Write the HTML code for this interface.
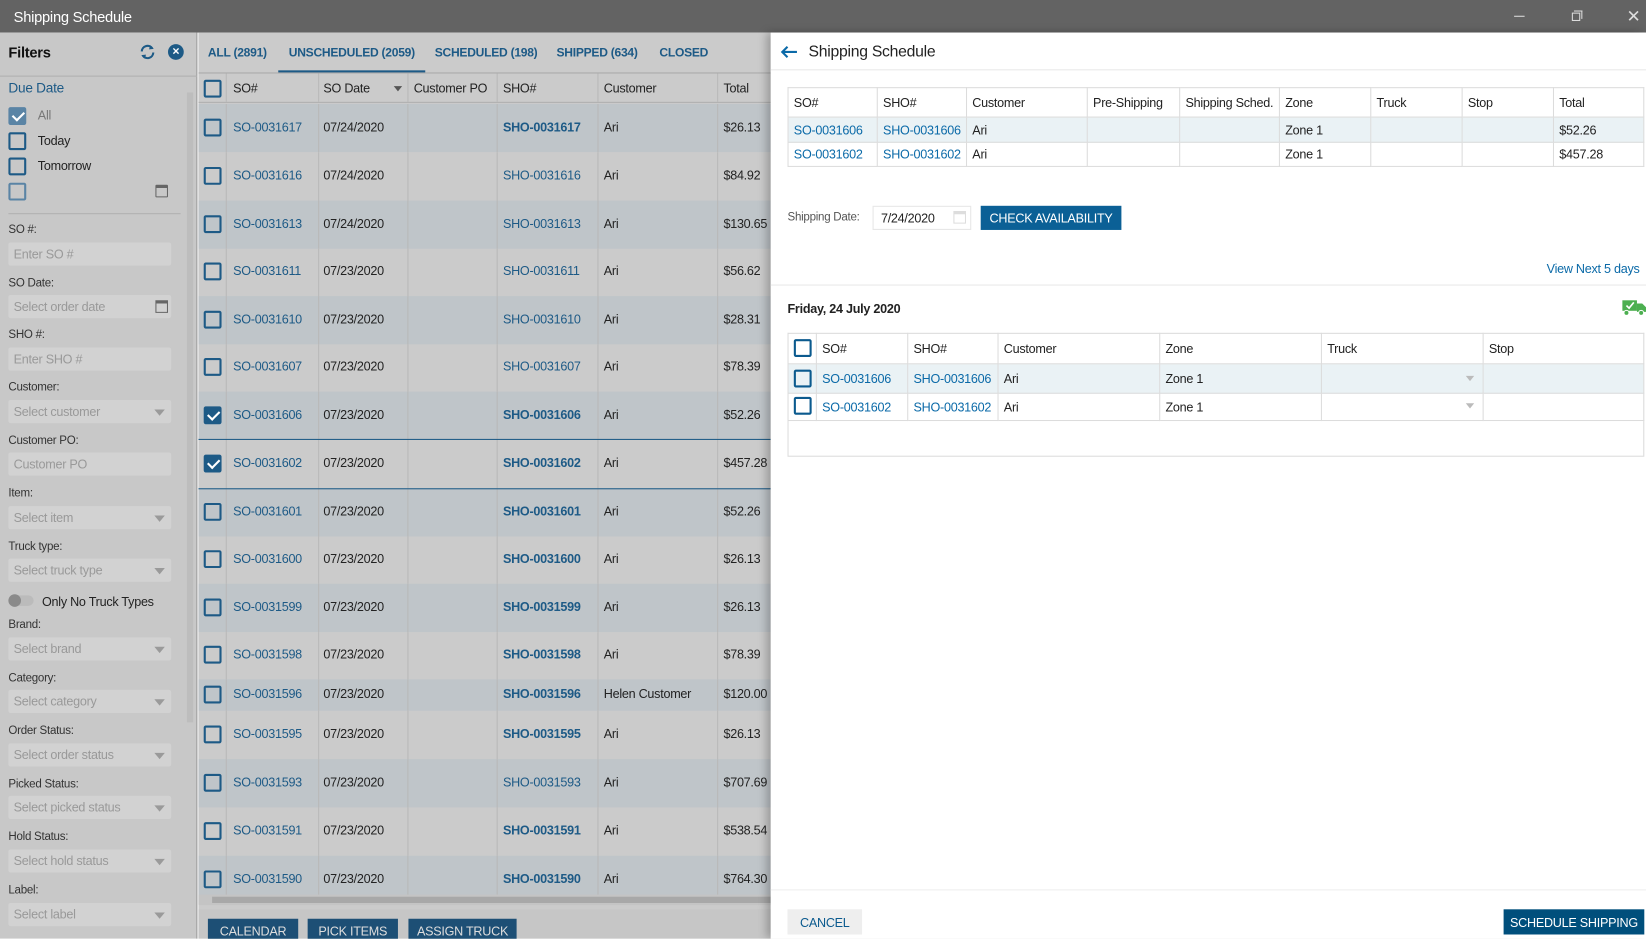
<!DOCTYPE html>
<html><head><meta charset="utf-8">
<style>
*{box-sizing:border-box;margin:0;padding:0}
html,body{width:1646px;height:938px;overflow:hidden;background:#fff}
#s{position:absolute;left:0;top:0;width:1568px;height:894px;transform:scale(1.05);transform-origin:0 0;font-family:"Liberation Sans",sans-serif;font-size:12px;letter-spacing:-0.25px;color:#222;overflow:hidden}
.a{position:absolute}
.t{position:absolute;white-space:nowrap}
.cb{position:absolute;width:17px;height:17px;border:2px solid #1d5a86;border-radius:2px}
.cb.on{background:#1d5a86}
.cb.on:after{content:"";position:absolute;left:4px;top:0px;width:5px;height:9px;border:solid #fff;border-width:0 2px 2px 0;transform:rotate(45deg)}
.lbl{position:absolute;left:8px;font-size:11px;color:#333}
.inp{position:absolute;left:8px;width:155px;height:22px;background:#d2d2d2;border-radius:2px;color:#999;font-size:12px;padding:4px 5px}
.dd:after{content:"";position:absolute;right:6px;top:9px;border:5px solid transparent;border-top:6px solid #9a9a9a}
.row{position:absolute;left:189px;width:545px}
.row .c{position:absolute;top:0;bottom:0;border-left:1px solid #b8b8b8}
.lk{color:#1d5a86}
.rl{color:#0b6aa8}
.tab{position:absolute;top:45px;font-weight:bold;color:#1d5a86;font-size:11.5px;white-space:nowrap}
table{border-collapse:collapse;position:absolute;background:#fff}
td{border:1px solid #dcdcdc;padding:0 5px;font-size:12px;white-space:nowrap}
</style></head><body><div id="s">
<div class="a" style="left:0;top:0;width:1568px;height:31px;background:#636363"></div>
<div class="t" style="left:13px;top:8px;color:#fff;font-size:14px">Shipping Schedule</div>
<div class="a" style="left:1442px;top:15px;width:10px;height:1px;background:#ddd"></div>
<div class="a" style="left:1497px;top:12px;width:8px;height:8px;border:1px solid #ddd"></div>
<div class="a" style="left:1499px;top:10px;width:8px;height:8px;border-top:1px solid #ddd;border-right:1px solid #ddd"></div>
<div class="t" style="left:1549px;top:6px;color:#ddd;font-size:16px">✕</div>

<div class="a" style="left:0;top:31px;width:188px;height:863px;background:#c8c8c8;border-right:1px solid #9a9a9a"></div>
<div class="t" style="left:8px;top:42px;font-size:14px;font-weight:bold;color:#111">Filters</div>
<svg class="a" style="left:132px;top:42px" width="17" height="15" viewBox="0 0 17 15"><path d="M3 7a5.5 5.5 0 0 1 10-3M14 8a5.5 5.5 0 0 1-10 3" fill="none" stroke="#1d5a86" stroke-width="2"/><path d="M11 1l3.5 3.5L10 5z M6 14L2.5 10.5 7 10z" fill="#1d5a86"/></svg>
<div class="a" style="left:160px;top:42px;width:15px;height:15px;border-radius:50%;background:#1d5a86;color:#fff;font-size:9px;text-align:center;line-height:15px;font-weight:bold">✕</div>
<div class="a" style="left:0;top:72px;width:188px;height:1px;background:#b0b0b0"></div>
<div class="a" style="left:178px;top:88px;width:6px;height:600px;background:#bdbdbd"></div>
<div class="t" style="left:8px;top:76px;font-size:13px;color:#1d5a86">Due Date</div>
<div class="cb on" style="left:8px;top:102px;border-color:#5a84a5;background:#5a84a5"></div><div class="t" style="left:36px;top:103px;color:#777">All</div>
<div class="cb" style="left:8px;top:126px"></div><div class="t" style="left:36px;top:127px">Today</div>
<div class="cb" style="left:8px;top:150px"></div><div class="t" style="left:36px;top:151px">Tomorrow</div>
<div class="cb" style="left:8px;top:174px;border-color:#5a84a5"></div>
<div class="a" style="left:148px;top:176px;width:12px;height:12px;border:1.5px solid #666;border-top-width:3px;border-radius:1px"></div>
<div class="a" style="left:8px;top:203px;width:164px;height:1px;background:#b0b0b0"></div>
<div class="lbl" style="top:213px">SO #:</div><div class="inp" style="top:231px">Enter SO #</div>
<div class="lbl" style="top:264px">SO Date:</div><div class="inp" style="top:281px">Select order date</div>
<div class="a" style="left:148px;top:286px;width:12px;height:12px;border:1.5px solid #666;border-top-width:3px"></div>
<div class="lbl" style="top:313px">SHO #:</div><div class="inp" style="top:331px">Enter SHO #</div>
<div class="lbl" style="top:363px">Customer:</div><div class="inp dd" style="top:381px">Select customer</div>
<div class="lbl" style="top:414px">Customer PO:</div><div class="inp" style="top:431px">Customer PO</div>
<div class="lbl" style="top:464px">Item:</div><div class="inp dd" style="top:482px">Select item</div>
<div class="lbl" style="top:515px">Truck type:</div><div class="inp dd" style="top:532px">Select truck type</div>
<div class="a" style="left:8px;top:567px;width:24px;height:10px;border-radius:5px;background:#bbb"></div>
<div class="a" style="left:8px;top:566px;width:12px;height:12px;border-radius:50%;background:#8a8a8a"></div>
<div class="t" style="left:40px;top:566px">Only No Truck Types</div>
<div class="lbl" style="top:589px">Brand:</div><div class="inp dd" style="top:607px">Select brand</div>
<div class="lbl" style="top:640px">Category:</div><div class="inp dd" style="top:657px">Select category</div>
<div class="lbl" style="top:690px">Order Status:</div><div class="inp dd" style="top:708px">Select order status</div>
<div class="lbl" style="top:741px">Picked Status:</div><div class="inp dd" style="top:758px">Select picked status</div>
<div class="lbl" style="top:791px">Hold Status:</div><div class="inp dd" style="top:809px">Select hold status</div>
<div class="lbl" style="top:842px">Label:</div><div class="inp dd" style="top:860px">Select label</div>

<div class="a" style="left:189px;top:31px;width:545px;height:863px;background:#cbcbcb"></div>
<div class="tab" style="left:198px">ALL (2891)</div>
<div class="tab" style="left:275px">UNSCHEDULED (2059)</div>
<div class="a" style="left:265px;top:67px;width:140px;height:2px;background:#1d5a86"></div>
<div class="tab" style="left:414px">SCHEDULED (198)</div>
<div class="tab" style="left:530px">SHIPPED (634)</div>
<div class="tab" style="left:628px">CLOSED</div>
<div class="a" style="left:189px;top:69px;width:545px;height:1px;background:#aaa"></div>
<div class="row" style="top:70px;height:28px;background:#cbcbcb;border-bottom:1px solid #b0b0b0">
<div class="cb" style="left:5px;top:6px"></div>
<div class="c" style="left:26px"></div><div class="t" style="left:33px;top:7px">SO#</div>
<div class="c" style="left:114px"></div><div class="t" style="left:119px;top:7px">SO Date</div>
<div class="a" style="left:186px;top:12px;border:4px solid transparent;border-top:5px solid #555"></div>
<div class="c" style="left:199px"></div><div class="t" style="left:205px;top:7px">Customer PO</div>
<div class="c" style="left:284px"></div><div class="t" style="left:290px;top:7px">SHO#</div>
<div class="c" style="left:380px"></div><div class="t" style="left:386px;top:7px">Customer</div>
<div class="c" style="left:494px"></div><div class="t" style="left:500px;top:7px">Total</div>
</div>
<div id="rows"></div>
<div class="a" style="left:189px;top:418px;width:545px;height:1px;background:#1d5a86"></div>
<div class="a" style="left:189px;top:465px;width:545px;height:1px;background:#1d5a86"></div>
<div class="a" style="left:189px;top:852px;width:545px;height:10px;background:#c4c4c4"></div>
<div class="a" style="left:202px;top:854px;width:532px;height:6px;background:#a8a8a8"></div>
<div class="a" style="left:189px;top:866px;width:545px;height:28px;background:#c6c6c6"></div>
<div class="a" style="left:198px;top:875px;width:86px;height:22px;background:#1d4f75;color:#ddd;text-align:center;padding-top:5px">CALENDAR</div>
<div class="a" style="left:293px;top:875px;width:86px;height:22px;background:#1d4f75;color:#ddd;text-align:center;padding-top:5px">PICK ITEMS</div>
<div class="a" style="left:389px;top:875px;width:103px;height:22px;background:#1d4f75;color:#ddd;text-align:center;padding-top:5px">ASSIGN TRUCK</div>

<div class="a" style="left:734px;top:31px;width:834px;height:863px;background:#fff;box-shadow:-4px 0 8px rgba(0,0,0,.25)"></div>
<svg class="a" style="left:743px;top:43px" width="17" height="13" viewBox="0 0 17 13"><path d="M16 6.5H2M7 1.5L2 6.5l5 5" fill="none" stroke="#0b6aa8" stroke-width="2"/></svg>
<div class="t" style="left:770px;top:41px;font-size:15px;color:#222">Shipping Schedule</div>
<div class="a" style="left:734px;top:66px;width:834px;height:1px;background:#e8e8e8"></div>
<table style="left:750px;top:83px;width:816px">
<tr style="height:28px"><td style="width:85px">SO#</td><td style="width:85px">SHO#</td><td style="width:115px">Customer</td><td style="width:88px">Pre-Shipping</td><td style="width:95px">Shipping Sched.</td><td style="width:87px">Zone</td><td style="width:87px">Truck</td><td style="width:87px">Stop</td><td>Total</td></tr>
<tr style="height:24px;background:#eaf2f5"><td class="rl">SO-0031606</td><td class="rl">SHO-0031606</td><td>Ari</td><td></td><td></td><td>Zone 1</td><td></td><td></td><td>$52.26</td></tr>
<tr style="height:23px"><td class="rl">SO-0031602</td><td class="rl">SHO-0031602</td><td>Ari</td><td></td><td></td><td>Zone 1</td><td></td><td></td><td>$457.28</td></tr>
</table>
<div class="t" style="left:750px;top:201px;font-size:11px;color:#555">Shipping Date:</div>
<div class="a" style="left:831px;top:196px;width:94px;height:23px;border:1px solid #e6e6e6;padding:4px 7px">7/24/2020</div>
<div class="a" style="left:908px;top:201px;width:12px;height:12px;border:1px solid #ddd;border-top-width:3px"></div>
<div class="a" style="left:934px;top:196px;width:134px;height:23px;background:#0b6096;color:#fff;text-align:center;padding-top:5px">CHECK AVAILABILITY</div>
<div class="t" style="left:1473px;top:249px;color:#0b6aa8">View Next 5 days</div>
<div class="a" style="left:734px;top:271px;width:834px;height:1px;background:#e8e8e8"></div>
<div class="t" style="left:750px;top:287px;font-weight:bold">Friday, 24 July 2020</div>
<svg class="a" style="left:1545px;top:285px" width="23" height="17" viewBox="0 0 23 17"><rect x="0" y="1" width="14" height="10" fill="#4caf50"/><path d="M14 4h5l4 4v4h-9z" fill="#4caf50"/><circle cx="4" cy="13" r="2.4" fill="#4caf50" stroke="#fff"/><circle cx="18" cy="13" r="2.4" fill="#4caf50" stroke="#fff"/><path d="M4 6l2.5 2.5L11 3" fill="none" stroke="#fff" stroke-width="1.6"/></svg>
<div class="a" style="left:750px;top:317px;width:816px;height:118px;border:1px solid #dcdcdc"></div>
<table style="left:750px;top:317px;width:816px">
<tr style="height:29px"><td style="width:27px"></td><td style="width:87px">SO#</td><td style="width:86px">SHO#</td><td style="width:154px">Customer</td><td style="width:154px">Zone</td><td style="width:154px">Truck</td><td>Stop</td></tr>
<tr style="height:28px;background:#eaf2f5"><td></td><td class="rl">SO-0031606</td><td class="rl">SHO-0031606</td><td>Ari</td><td>Zone 1</td><td></td><td></td></tr>
<tr style="height:26px"><td></td><td class="rl">SO-0031602</td><td class="rl">SHO-0031602</td><td>Ari</td><td>Zone 1</td><td></td><td></td></tr>
</table>
<div class="cb" style="left:756px;top:323px;border-color:#0b5a8e"></div>
<div class="cb" style="left:756px;top:352px;border-color:#0b5a8e"></div>
<div class="cb" style="left:756px;top:378px;border-color:#0b5a8e"></div>
<div class="a" style="left:1396px;top:358px;border:4px solid transparent;border-top:5px solid #bbb"></div>
<div class="a" style="left:1396px;top:384px;border:4px solid transparent;border-top:5px solid #bbb"></div>
<div class="a" style="left:734px;top:847px;width:834px;height:1px;background:#eee"></div>
<div class="a" style="left:750px;top:866px;width:71px;height:24px;background:#eee;color:#0b5a8e;text-align:center;padding-top:6px">CANCEL</div>
<div class="a" style="left:1432px;top:866px;width:134px;height:24px;background:#004f7c;color:#fff;text-align:center;padding-top:6px">SCHEDULE SHIPPING</div>
</div>
<script>
var R=[["617","07/24/2020","$26.13",1,1,46],["616","07/24/2020","$84.92",0,0,46],["613","07/24/2020","$130.65",0,0,45.5],["611","07/23/2020","$56.62",0,0,45.5],["610","07/23/2020","$28.31",0,0,45.5],["607","07/23/2020","$78.39",0,0,45.5],["606","07/23/2020","$52.26",1,2,45.5],["602","07/23/2020","$457.28",1,2,46.5],["601","07/23/2020","$52.26",1,0,45.5],["600","07/23/2020","$26.13",1,0,45.5],["599","07/23/2020","$26.13",1,0,45.5],["598","07/23/2020","$78.39",1,0,45.5],["596","07/23/2020","$120.00",1,0,30],["595","07/23/2020","$26.13",1,0,45.5],["593","07/23/2020","$707.69",0,0,46],["591","07/23/2020","$538.54",1,0,46],["590","07/23/2020","$764.30",1,0,46]];
var y=99,h="";
R.forEach(function(r,i){var bg=i%2?"#cbcbcb":"#bfc5c9",H=r[5],m=H/2-8;
h+='<div class="row" style="top:'+y+'px;height:'+H+'px;background:'+bg+'">'+
'<div class="cb'+(r[4]==2?' on':'')+'" style="left:5px;top:'+(H/2-9)+'px"></div>'+
'<div class="c" style="left:26px"></div><div class="t lk" style="left:33px;top:'+m+'px">SO-0031'+r[0]+'</div>'+
'<div class="c" style="left:114px"></div><div class="t" style="left:119px;top:'+m+'px">'+r[1]+'</div>'+
'<div class="c" style="left:199px"></div><div class="c" style="left:284px"></div>'+
'<div class="t lk" style="left:290px;top:'+m+'px;'+(r[3]?'font-weight:bold':'')+'">SHO-0031'+r[0]+'</div>'+
'<div class="c" style="left:380px"></div><div class="t" style="left:386px;top:'+m+'px">'+(r[0]=="596"?"Helen Customer":"Ari")+'</div>'+
'<div class="c" style="left:494px"></div><div class="t" style="left:500px;top:'+m+'px">'+r[2]+'</div></div>';y+=H;});
document.getElementById("rows").outerHTML=h;
</script>
</body></html>
